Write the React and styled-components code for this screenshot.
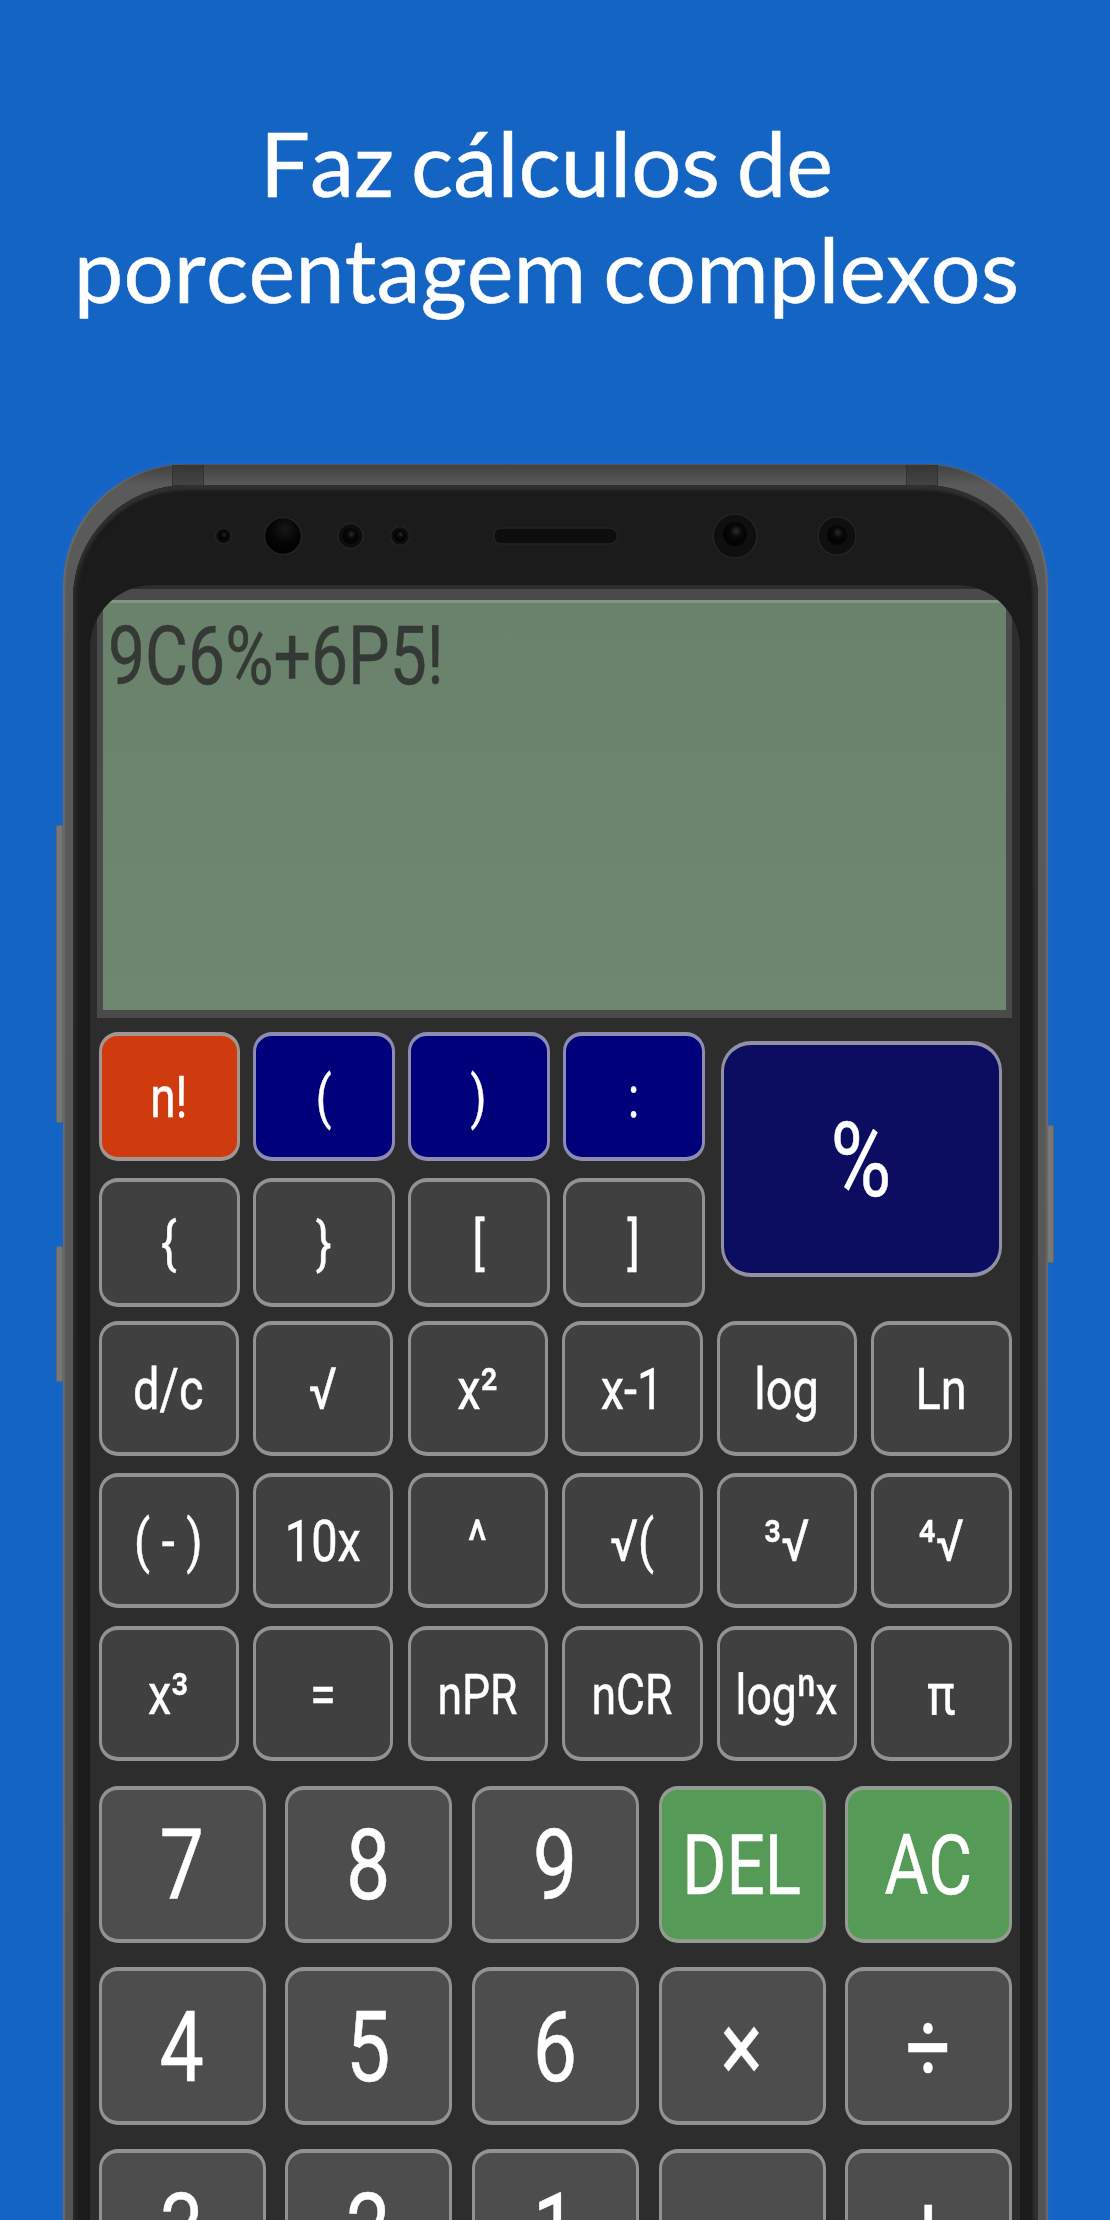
import React from 'react';
import styled, { createGlobalStyle } from 'styled-components';

const GlobalStyle = createGlobalStyle`
  * {
    box-sizing: border-box;
  }

  body {
    margin: 0;
    background: #1464c4;
  }
`;

const scientificTop = [
  { label: 'n!', tone: 'orange' },
  { label: '(', tone: 'navy' },
  { label: ')', tone: 'navy' },
  { label: ':', tone: 'navy' },
  { label: '{' },
  { label: '}' },
  { label: '[' },
  { label: ']' },
];

const scientific = [
  'd/c', '√', 'x²', 'x-1', 'log', 'Ln',
  '( - )', '10x', '^', '√(', '³√', '⁴√',
  'x³', '=', 'nPR', 'nCR', 'logⁿx', 'π',
];

const smallLabels = ['nPR', 'nCR', 'logⁿx'];

const numeric = [
  { label: '7' },
  { label: '8' },
  { label: '9' },
  { label: 'DEL', tone: 'green', size: 67.5 },
  { label: 'AC', tone: 'green', size: 67.5 },
  { label: '4' },
  { label: '5' },
  { label: '6' },
  { label: '×' },
  { label: '÷' },
  { label: '3' },
  { label: '2' },
  { label: '1' },
  { label: '-' },
  { label: '+' },
];

const Sensors = () => (
  <SensorStrip viewBox="0 0 960 60">
    <defs>
      <radialGradient id="lens" cx="55%" cy="38%" r="50%">
        <stop offset="0" stopColor="#2b2b2b" />
        <stop offset="0.5" stopColor="#080808" />
        <stop offset="1" stopColor="#030303" />
      </radialGradient>
      <radialGradient id="flash" cx="55%" cy="32%" r="60%">
        <stop offset="0" stopColor="#181818" />
        <stop offset="0.6" stopColor="#050505" />
        <stop offset="1" stopColor="#020202" />
      </radialGradient>
    </defs>
    <g stroke="#242424" strokeWidth="1.5">
      <circle cx="149.5" cy="30" r="8" fill="#0d0d0d" />
      <circle cx="209" cy="30" r="18.5" fill="url(#flash)" />
      <circle cx="276.5" cy="30" r="12.5" fill="#0d0d0d" />
      <circle cx="326" cy="30" r="9.5" fill="#0d0d0d" />
      <rect x="419.5" y="22" width="124" height="16" rx="8" fill="#0d0d0d" />
      <circle cx="661" cy="30" r="22" fill="#0f0f0f" />
      <circle cx="763" cy="30" r="19" fill="#0f0f0f" />
    </g>
    <g fill="url(#lens)">
      <circle cx="149.5" cy="30" r="5" />
      <circle cx="276.5" cy="30" r="8" />
      <circle cx="326" cy="30" r="6" />
      <circle cx="661" cy="28" r="12" />
      <circle cx="763" cy="29" r="10" />
    </g>
  </SensorStrip>
);

const App = () => (
  <Page>
    <GlobalStyle />
    <Headline>
      Faz cálculos de
      <br />
      porcentagem complexos
    </Headline>
    <Phone>
      <SideButton $side="left" $top={361} $height={298} />
      <SideButton $side="left" $top={782} $height={136} />
      <SideButton $side="right" $top={661} $height={138} />
      <AntennaBand $left={109} />
      <AntennaBand $left={843} />
      <Glass>
        <Sensors />
        <Screen>
          <Display>
            <Expression>9C6%+6P5!</Expression>
          </Display>
          <TopPad>
            <TopKeys>
              {scientificTop.map(({ label, tone }) => (
                <Key key={label} $tone={tone} $size={46}>
                  <Label $drop={0.5}>{label}</Label>
                </Key>
              ))}
            </TopKeys>
            <PercentKey $tone="indigo" $size={83}>
              <Label $drop={1}>%</Label>
            </PercentKey>
          </TopPad>
          <FunctionPad>
            {scientific.map((label) => (
              <Key key={label} $size={smallLabels.includes(label) ? 44.5 : 47}>
                <Label $drop={smallLabels.includes(label) ? 2 : 0}>{label}</Label>
              </Key>
            ))}
          </FunctionPad>
          <NumberPad>
            {numeric.map(({ label, tone = 'gray', size = 79 }) => (
              <Key key={label} $tone={tone} $size={size}>
                <Label $drop={tone === 'green' ? 0.5 : 1.5}>{label}</Label>
              </Key>
            ))}
          </NumberPad>
        </Screen>
      </Glass>
    </Phone>
  </Page>
);

const tones = {
  dark: { fill: '#404040', line: '#929292' },
  gray: { fill: '#4d4d4d', line: '#929292' },
  orange: { fill: '#cf3a0e', line: '#a39690' },
  navy: { fill: '#00007b', line: '#8c8cb0' },
  indigo: { fill: '#0c0c60', line: '#9191a3' },
  green: { fill: '#559a56', line: '#929c90' },
};

const Page = styled.main`
  width: 1110px;
  height: 2220px;
  overflow: hidden;
  background: #1464c4;
  display: flex;
  flex-direction: column;
`;

const Headline = styled.h1`
  height: 464px;
  flex: none;
  margin: 0;
  padding: 110px 17px 0 0;
  color: #fff;
  font: 400 88.5px/106px Lato, sans-serif;
  font-kerning: none;
  letter-spacing: 0.1px;
  word-spacing: -6px;
  -webkit-text-stroke: 0.5px #fff;
  text-align: center;
  white-space: nowrap;
`;

const Phone = styled.section`
  position: relative;
  flex: none;
  width: 985px;
  height: 1900px;
  margin-left: 63px;
  padding: 21px 10px 0;
  border-radius: 122px 122px 0 0;
  background: linear-gradient(#404040, #5a5a5a 21px, #535353 100%);
  box-shadow: inset 2px 0 2px #6c6c6c, inset -2px 0 2px #6c6c6c, 0 0 8px #1a6ad4;
`;

const SideButton = styled.span`
  position: absolute;
  top: ${({ $top }) => $top}px;
  ${({ $side }) => $side}: ${({ $side }) => ($side === 'left' ? -7 : -6)}px;
  width: 7px;
  height: ${({ $height }) => $height}px;
  border: 1px solid #666;
  border-radius: 2px;
  background: #777;
`;

const AntennaBand = styled.span`
  position: absolute;
  top: 1px;
  left: ${({ $left }) => $left}px;
  width: 32px;
  height: 24px;
  border: solid #333;
  border-width: 0 1px;
  background: linear-gradient(#363636, #464646);
`;

const Glass = styled.div`
  position: relative;
  height: 100%;
  padding: 21px 18px 0 17px;
  border-radius: 114px 114px 0 0;
  background: #1b1b1b;
  box-shadow: inset 0 5px 3px #303030, inset 4px 0 4px #282828, inset -5px 0 3px #303030;
`;

const SensorStrip = styled.svg`
  display: block;
  width: 960px;
  height: 60px;
  margin: 0 0 19px -16px;
`;

const Screen = styled.div`
  height: 1700px;
  padding: 4px 8px 0 7px;
  border-radius: 63px 63px 0 0;
  background: #2d2d2d;
  overflow: hidden;
`;

const Display = styled.div`
  height: 429px;
  border: solid #4a4a4a;
  border-width: 11px 6px 8px;
  background: linear-gradient(#839483 3px, #6a816b 3px, #6f8770);
`;

const Expression = styled.div`
  padding: 15px 0 0 5px;
  color: #343935;
  font: 400 66px/80px Roboto, sans-serif;
  -webkit-text-stroke: 0.4px #343935;
  transform: scaleY(1.24);
`;

// glyphs are taller than their normal proportions on every key
const Label = styled.span`
  transform: translate(-0.4px, ${({ $drop = 0 }) => $drop}px) scaleY(1.24);
  -webkit-text-stroke: 0.4px #fff;
  white-space: pre;
`;

const Key = styled.button`
  display: flex;
  align-items: center;
  justify-content: center;
  min-width: 0;
  padding: 0;
  border: solid ${({ $tone = 'dark' }) => tones[$tone].line};
  border-width: 4px 3.5px;
  border-radius: 19px;
  background: ${({ $tone = 'dark' }) => tones[$tone].fill};
  color: #fff;
  font: 400 ${({ $size }) => $size}px Roboto, sans-serif;
`;

const PercentKey = styled(Key)`
  width: 281.5px;
  height: 236px;
  margin: 9px 0 0 16px;
  border-radius: 30px;
`;

const TopPad = styled.div`
  display: flex;
  padding: 14px 0 0 1.5px;
`;

const TopKeys = styled.div`
  display: grid;
  grid-template-columns: repeat(4, 141.5px);
  grid-auto-rows: 129px;
  gap: 17px 13.4px;
`;

const FunctionPad = styled.div`
  display: grid;
  grid-template-columns: repeat(6, 140.4px);
  grid-auto-rows: 135px;
  gap: 17.3px 14.2px;
  padding: 14px 0 0 1.5px;
`;

const NumberPad = styled.div`
  display: grid;
  grid-template-columns: repeat(5, 167px);
  grid-auto-rows: 157.3px;
  gap: 24.4px 19.7px;
  padding: 25px 0 0 1.5px;
`;

export default App;
